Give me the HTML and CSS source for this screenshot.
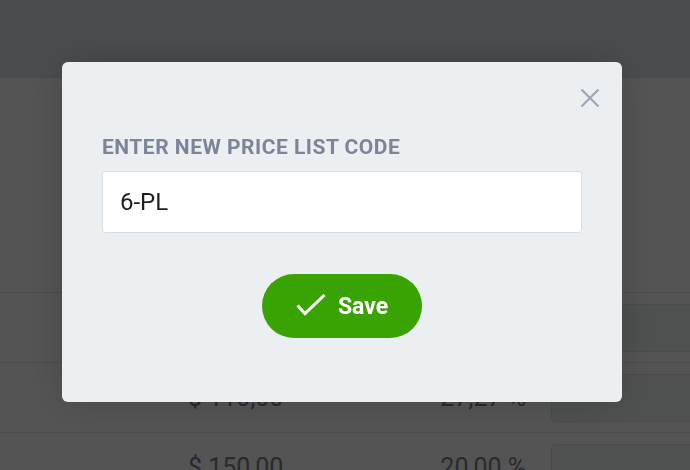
FILE: index.html
```html
<!DOCTYPE html>
<html lang="en">
<head>
<meta charset="utf-8">
<title>New price list</title>
<link rel="stylesheet" href="styles.css">
</head>
<body>
<div class="page">
  <header class="topbar"></header>
  <main class="content">
    <div class="table">
      <div class="row">
        <span class="price">$ 100,00</span>
        <span class="pct">30,00 %</span>
        <span class="field"></span>
      </div>
      <div class="row">
        <span class="price">$ 110,00</span>
        <span class="pct">27,27 %</span>
        <span class="field"></span>
      </div>
      <div class="row">
        <span class="price">$ 150,00</span>
        <span class="pct">20,00 %</span>
        <span class="field"></span>
      </div>
    </div>
  </main>
</div>
<div class="overlay">
  <div class="modal">
    <button class="close" aria-label="Close">
      <svg width="20" height="20" viewBox="0 0 20 20"><path d="M1.5 1.5 L18.5 18.5 M18.5 1.5 L1.5 18.5" stroke="#a0a5b4" stroke-width="2.2" fill="none"/></svg>
    </button>
    <label class="label" for="code">ENTER NEW PRICE LIST CODE</label>
    <input class="input" id="code" type="text" value="6-PL">
    <div class="actions">
      <button class="save">
        <svg width="30" height="24" viewBox="0 0 30 24"><path d="M1.5 11.5 L9 19.5 L28.5 1" stroke="#fff" stroke-width="3" fill="none"/></svg>
        <span>Save</span>
      </button>
    </div>
  </div>
</div>
</body>
</html>
```
FILE: styles.css
```css
* { box-sizing: border-box; }
html, body { margin: 0; padding: 0; }
body {
  width: 690px;
  height: 470px;
  overflow: hidden;
  background: #ffffff;
  font-family: Roboto, "Liberation Sans", Arial, sans-serif;
}
.page { width: 690px; }
.topbar {
  height: 78px;
  background: #e2e5ea;
}
.content {
  padding-top: 214px;
}
.row {
  display: grid;
  grid-template-columns: 150px 163px 200px;
  column-gap: 25px;
  align-items: center;
  height: 70px;
  padding-left: 188px;
  border-top: 1px solid #e4e4e4;
  font-size: 25px;
  color: #7a808b;
}
.pct { text-align: right; }
.field {
  display: block;
  height: 48px;
  border: 1px solid #e1e3e6;
  border-radius: 4px;
  background: #eff1f2;
}
.overlay {
  position: fixed;
  inset: 0;
  background: rgba(0, 0, 0, 0.67);
  padding: 62px 0 0 62px;
}
.modal {
  position: relative;
  width: 560px;
  height: 340px;
  background: #eceff2;
  border-radius: 6px;
  padding: 73px 40px 0 40px;
  box-shadow: 0 0 40px rgba(0, 0, 0, 0.18);
}
.close {
  position: absolute;
  top: 26px;
  right: 22px;
  width: 20px;
  height: 20px;
  padding: 0;
  border: 0;
  background: none;
  display: block;
}
.close svg { display: block; }
.label {
  display: block;
  font-size: 21px;
  letter-spacing: 0.5px;
  line-height: 24px;
  font-weight: 700;
  color: #7c8498;
  margin-bottom: 12px;
}
.input {
  display: block;
  width: 480px;
  height: 62px;
  border: 1.5px solid #d9dde3;
  border-radius: 3px;
  background: #ffffff;
  padding: 0 17px;
  font-family: Roboto, "Liberation Sans", Arial, sans-serif;
  font-size: 24px;
  color: #1f1f1f;
  outline: none;
}
.actions {
  display: flex;
  justify-content: center;
  margin-top: 41px;
}
.save {
  display: flex;
  align-items: center;
  justify-content: center;
  gap: 12px;
  width: 160px;
  height: 64px;
  border: 0;
  border-radius: 32px;
  background: #39a303;
  color: #ffffff;
  font-family: Roboto, "Liberation Sans", Arial, sans-serif;
  font-size: 23px;
  font-weight: 700;
  padding: 0;
}
.save svg { display: block; }
```
